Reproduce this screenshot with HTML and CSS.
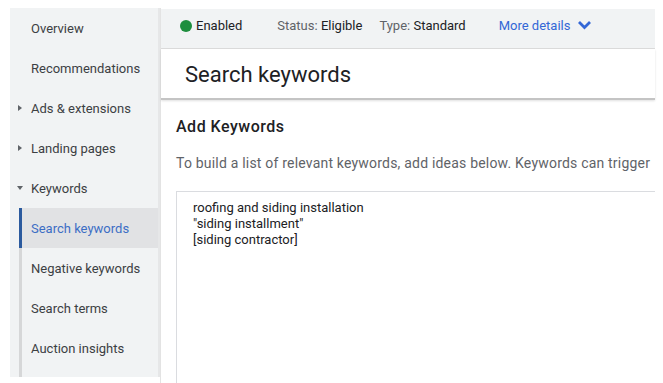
FILE: index.html
```html
<!DOCTYPE html>
<html lang="en">
<head>
  <meta charset="UTF-8">
  <title>Search keywords</title>
  <link rel="stylesheet" href="styles.css">
</head>
<body>
  <div class="page">
    <nav class="sidebar">
      <a class="nav-item">Overview</a>
      <a class="nav-item">Recommendations</a>
      <a class="nav-item has-arrow"><span class="arrow right"></span>Ads &amp; extensions</a>
      <a class="nav-item has-arrow"><span class="arrow right"></span>Landing pages</a>
      <a class="nav-item has-arrow"><span class="arrow down"></span>Keywords</a>
      <div class="sub-list">
        <a class="nav-item sub active">Search keywords</a>
        <a class="nav-item sub">Negative keywords</a>
        <a class="nav-item sub">Search terms</a>
        <a class="nav-item sub">Auction insights</a>
      </div>
    </nav>

    <main class="main">
      <div class="status-bar">
        <span class="dot"></span>
        <span class="enabled">Enabled</span>
        <span class="status">Status: <b>Eligible</b></span>
        <span class="type">Type: <b>Standard</b></span>
        <a class="more">More details
          <svg width="15" height="10" viewBox="0 0 15 10"><path d="M2 2 L7.5 7.5 L13 2" fill="none" stroke="#3367d6" stroke-width="2.8"/></svg>
        </a>
      </div>
      <div class="title-bar">
        <h1>Search keywords</h1>
      </div>

      <section class="content">
        <h2>Add Keywords</h2>
        <p class="hint">To build a list of relevant keywords, add ideas below. Keywords can trigger</p>
        <div class="keyword-box">
          <div>roofing and siding installation</div>
          <div>"siding installment"</div>
          <div>[siding contractor]</div>
        </div>
      </section>
    </main>
  </div>
</body>
</html>
```

FILE: styles.css
```css
body {
  margin: 0;
  background: #fff;
  font-family: Roboto, 'Liberation Sans', sans-serif;
  color: #3c4043;
  overflow: hidden;
}

.page {
  display: flex;
  padding: 8px 8px 0 10px;
  height: 383px;
  box-sizing: border-box;
}

.sidebar {
  width: 148px;
  height: 369px;
  background: #f1f3f4;
  border-right: 2px solid #e6e7e8;
  flex-shrink: 0;
}

.nav-item {
  display: flex;
  align-items: center;
  height: 40px;
  padding-left: 21px;
  font-size: 13px;
  color: #3c4043;
  position: relative;
}

.arrow {
  position: absolute;
  left: 8px;
  width: 0;
  height: 0;
}

.arrow.right {
  border-top: 3px solid transparent;
  border-bottom: 3px solid transparent;
  border-left: 4px solid #5f6368;
}

.arrow.down {
  left: 7px;
  border-left: 3px solid transparent;
  border-right: 3px solid transparent;
  border-top: 4px solid #5f6368;
}

.sub-list {
  margin-left: 9px;
  border-left: 3px solid #d6d7d8;
  padding-bottom: 9px;
}

.nav-item.sub {
  padding-left: 9px;
}

.nav-item.active {
  background: #e1e2e4;
  color: #3c6ec4;
  margin-left: -3px;
  border-left: 3px solid #2b5a9e;
}

.main {
  flex: 1;
  border-left: 1px solid #e3e3e3;
  display: flex;
  flex-direction: column;
  min-height: 0;
}

.status-bar {
  flex-shrink: 0;
  display: flex;
  align-items: center;
  height: 33px;
  margin-top: 1px;
  padding: 0 0 6px 19px;
  background: #f1f3f4;
  border-bottom: 1px solid #dcdcdc;
  font-size: 13px;
  color: #5f6368;
}

.dot {
  width: 12px;
  height: 12px;
  border-radius: 50%;
  background: #1e8e3e;
  margin-right: 4px;
}

.enabled {
  color: #202124;
  margin-right: 35px;
}

.status b, .type b {
  font-weight: normal;
  color: #202124;
}

.status {
  margin-right: 17px;
}

.type {
  margin-right: 33px;
}

.more {
  color: #3367d6;
  display: flex;
  align-items: center;
  gap: 7px;
  margin-top: -1px;
}

.title-bar {
  flex-shrink: 0;
  height: 47px;
  padding: 2px 0 0 24px;
  border-bottom: 2px solid #c4c4c4;
  box-shadow: 0 1px 2px rgba(0,0,0,0.12);
  display: flex;
  align-items: center;
}

h1 {
  margin: 0;
  font-size: 22px;
  font-weight: normal;
  color: #202124;
}

.content {
  padding: 17px 0 0 15px;
}

h2 {
  margin: 0;
  font-size: 16px;
  letter-spacing: 0.5px;
  font-weight: 500;
  color: #202124;
  line-height: 20px;
}

.hint {
  margin: 16px 0 0;
  font-size: 14px;
  letter-spacing: 0.2px;
  line-height: 20px;
  color: #5f6368;
  white-space: nowrap;
}

.keyword-box {
  margin-top: 18px;
  height: 190px;
  border-top: 1px solid #dadce0;
  border-left: 1px solid #dadce0;
  padding: 8px 0 0 16px;
  font-size: 13px;
  line-height: 16px;
  color: #202124;
}
```
